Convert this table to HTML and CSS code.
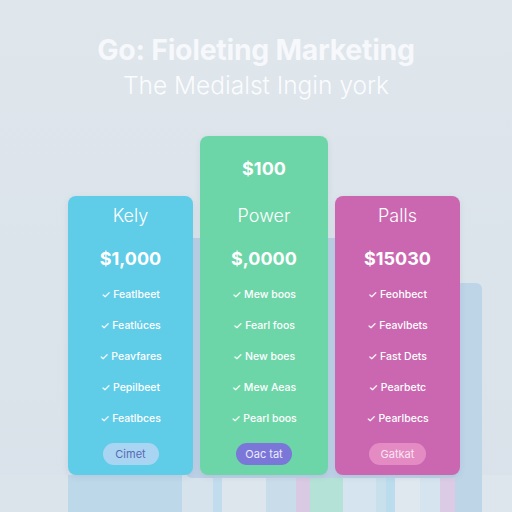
FILE: index.html
```html
<!DOCTYPE html>
<html>
<head>
<meta charset="utf-8">
<link rel="stylesheet" href="styles.css">
</head>
<body>
<header class="hero">
  <h1 class="title">Go: Fioleting Marketing</h1>
  <p class="subtitle">The Medialst Ingin york</p>
</header>
<section class="plans">
  <div class="backdrop"></div>
  <div class="backdrop-right"></div>
  <div class="card card-blue">
    <div class="name">Kely</div>
    <div class="price">$1,000</div>
    <ul class="features">
      <li>✓ Featlbeet</li>
      <li>✓ Featlúces</li>
      <li>✓ Peavfares</li>
      <li>✓ Pepilbeet</li>
      <li>✓ Featlbces</li>
    </ul>
    <button class="btn btn-blue">Cimet</button>
  </div>
  <div class="card card-green">
    <div class="price top-price">$100</div>
    <div class="name">Power</div>
    <div class="price">$,0000</div>
    <ul class="features">
      <li>✓ Mew boos</li>
      <li>✓ Fearl foos</li>
      <li>✓ New boes</li>
      <li>✓ Mew Aeas</li>
      <li>✓ Pearl boos</li>
    </ul>
    <button class="btn btn-purple">Oac tat</button>
  </div>
  <div class="card card-pink">
    <div class="name">Palls</div>
    <div class="price">$15030</div>
    <ul class="features">
      <li>✓ Feohbect</li>
      <li>✓ Feavlbets</li>
      <li>✓ Fast Dets</li>
      <li>✓ Pearbetc</li>
      <li>✓ Pearlbecs</li>
    </ul>
    <button class="btn btn-pink">Gatkat</button>
  </div>
</section>
<div class="reflection"></div>
</body>
</html>
```

FILE: styles.css
```css
* { box-sizing: border-box; }
html, body { margin: 0; padding: 0; }
body {
  width: 512px;
  height: 512px;
  overflow: hidden;
  background: linear-gradient(180deg, #dfe6ec 0%, #d9e2ea 100%);
  font-family: Inter, "Noto Sans", sans-serif;
  color: #fff;
}
.hero {
  padding-top: 34px;
  text-align: center;
}
.title {
  margin: 0;
  font-size: 28.5px;
  line-height: 32px;
  font-weight: 700;
  letter-spacing: -0.3px;
  color: #f6f8fb;
}
.subtitle {
  margin: 4px 0 0;
  font-size: 24.5px;
  line-height: 30px;
  font-weight: 300;
  color: #fbfcfd;
}
.plans {
  position: relative;
  margin-top: 36px;
  height: 339px;
  display: flex;
  align-items: flex-end;
  justify-content: center;
  gap: 7px;
  padding-left: 16px;
}
.backdrop {
  position: absolute;
  left: 186px;
  top: 102px;
  width: 272px;
  height: 240px;
  background: #bcd1e5;
  border-radius: 6px;
}
.backdrop-right {
  position: absolute;
  left: 455px;
  top: 147px;
  width: 27px;
  height: 240px;
  background: #bed4e7;
  border-radius: 6px;
}
.card {
  position: relative;
  width: 125px;
  height: 279px;
  border-radius: 8px;
  display: flex;
  flex-direction: column;
  align-items: center;
  justify-content: flex-end;
  padding-bottom: 10px;
  box-shadow: 0 2px 6px rgba(80, 110, 140, 0.12);
}
.card-blue { background: #5fcce8; }
.card-green { background: #6dd6a8; width: 128px; height: 339px; }
.card-pink { background: #cb67b1; }
.name {
  font-size: 18px;
  line-height: 24px;
  font-weight: 300;
}
.price {
  margin-top: 18px;
  font-size: 18px;
  line-height: 26px;
  font-weight: 700;
}
.top-price {
  margin-top: 0;
  margin-bottom: 22px;
}
.features {
  list-style: none;
  margin: 15px 0 0;
  padding: 0;
  display: flex;
  flex-direction: column;
  gap: 15px;
  align-items: center;
}
.features li {
  font-size: 10.5px;
  line-height: 16px;
  font-weight: 500;
  white-space: nowrap;
}
.btn {
  margin-top: 16px;
  width: 56px;
  height: 22px;
  border: 0;
  border-radius: 11px;
  font-family: Inter, "Noto Sans", sans-serif;
  font-size: 11px;
  line-height: 22px;
  padding: 0;
}
.btn-blue { background: #a9d5f2; color: #5a69b2; }
.btn-purple { background: #7b77d9; color: #eceafd; }
.btn-pink { background: #e48bc4; color: #fbe4f2; width: 57px; }
.reflection {
  height: 37px;
  background: linear-gradient(90deg,
    #dbe4eb 0px, #dbe4eb 68px,
    #bdd8e9 68px, #bdd8e9 182px,
    #d6e3ec 182px, #d6e3ec 213px,
    #c1dcec 213px, #c1dcec 222px,
    #dde6ed 222px, #dde6ed 266px,
    #c9dcea 266px, #c9dcea 296px,
    #dac9e3 296px, #dac9e3 310px,
    #b5e2d6 310px, #b5e2d6 343px,
    #d5e4ee 343px, #d5e4ee 376px,
    #c8dfec 376px, #c8dfec 386px,
    #badcec 386px, #badcec 395px,
    #dfe8ef 395px, #dfe8ef 420px,
    #d5e4ee 420px, #d5e4ee 440px,
    #dccbe5 440px, #dccbe5 460px,
    #cfe0ec 460px, #cfe0ec 482px,
    #dde6ed 482px, #dde6ed 512px);
}
```
